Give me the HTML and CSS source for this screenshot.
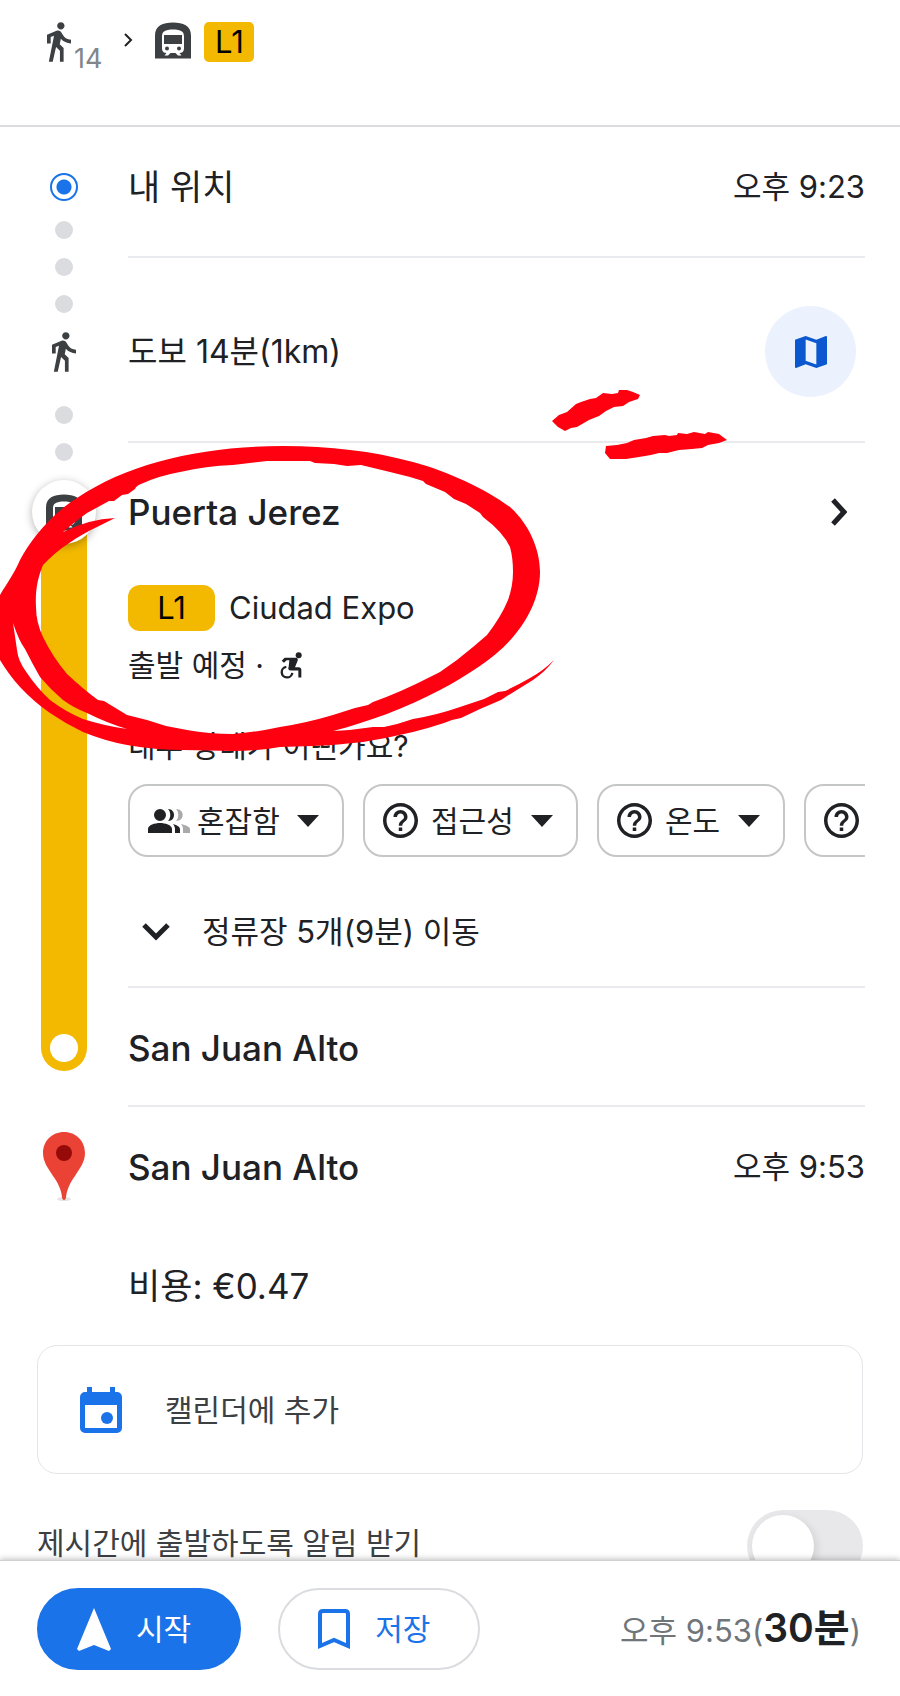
FILE: index.html
```html
<!DOCTYPE html>
<html lang="ko">
<head>
    <meta charset="UTF-8">
    <meta name="viewport" content="width=device-width, initial-scale=1.0">
    <title>San Juan Alto</title>
    <link rel="stylesheet" href="styles.css">
</head>
<body>
    <!-- shared icons -->
    <svg class="sprite" aria-hidden="true">
        <symbol id="walk" viewBox="6 1.5 13 21.5">
            <path d="M13.5 5.5c1.1 0 2-.9 2-2s-.9-2-2-2-2 .9-2 2 .9 2 2 2zM9.8 8.9L7 23h2.1l1.8-8 2.1 2v6h2v-7.500l-2.1-2 .6-3C14.8 12 16.8 13 19 13v-2c-1.900 0-3.500-1-4.300-2.400l-1-1.600c-.4-.6-1-1-1.700-1-.3 0-.5.1-.8.1L6 8.300V13h2V9.600l1.800-.7z"/>
        </symbol>
        <symbol id="subway" viewBox="0 0 36 36">
            <path fill-rule="evenodd" d="M0 36V13C0 3 8 0 18 0s18 3 18 13v23zM7 14v12c0 3 2 4.500 4.500 4.500L9.500 33h3.500l2.500-2.500h5L23 33h3.500l-2-2.500C27 30.500 29 29 29 26V14c0-5-3-7-11-7S7 9 7 14zm2-1.500h18v9H9zM12 24a2 2 0 1 1 0 4 2 2 0 0 1 0-4zm12 0a2 2 0 1 1 0 4 2 2 0 0 1 0-4z"/>
        </symbol>
        <symbol id="help" viewBox="2 2 20 20">
            <path d="M11 18h2v-2h-2v2zm1-16C6.480 2 2 6.480 2 12s4.480 10 10 10 10-4.480 10-10S17.520 2 12 2zm0 18c-4.410 0-8-3.590-8-8s3.590-8 8-8 8 3.590 8 8-3.590 8-8 8zm0-14c-2.210 0-4 1.790-4 4h2c0-1.100.9-2 2-2s2 .9 2 2c0 2-3 1.750-3 5h2c0-2.250 3-2.500 3-5 0-2.210-1.790-4-4-4z"/>
        </symbol>
        <symbol id="caret" viewBox="0 0 22 12">
            <path d="M0 0h22L11 12z"/>
        </symbol>
    </svg>

    <header class="summary">
        <svg class="icon-walk"><use href="#walk"/></svg>
        <span class="minutes">14</span>
        <svg class="sep" viewBox="0 0 9 14"><path d="M1 1l6 6-6 6"/></svg>
        <svg class="icon-subway"><use href="#subway"/></svg>
        <span class="line-badge">L1</span>
    </header>

    <main>
        <div class="route">
            <div class="rail">
                <span class="origin"></span>
                <span class="dot"></span>
                <span class="dot"></span>
                <span class="dot"></span>
                <svg class="icon-walk"><use href="#walk"/></svg>
                <span class="dot after-walk"></span>
                <span class="dot"></span>
                <span class="station"><svg class="icon-subway"><use href="#subway"/></svg></span>
                <span class="track"><span class="stop"></span></span>
                <svg class="pin" viewBox="0 0 42 70">
                    <ellipse cx="21" cy="67" rx="7" ry="2" fill="#e4e4e4"/>
                    <path d="M21 0C9 0 0 9 0 21c0 9 5 15 10 23 5 7 8 13 9 21 0 4 4 4 4 0 1-8 4-14 9-21 5-8 10-14 10-23C42 9 33 0 21 0z" fill="#ea4335"/>
                    <circle cx="21" cy="21" r="8" fill="#960a0a"/>
                </svg>
            </div>

            <div class="steps">
                <section class="step">
                    <h2 class="here">내 위치</h2>
                    <time>오후 9:23</time>
                </section>

                <section class="step step-walk">
                    <p>도보 14분(1km)</p>
                    <button class="map-button" aria-label="지도">
                        <svg viewBox="3 3 18 18"><path d="M20.500 3l-.16.03L15 5.100 9 3 3.360 4.900c-.21.07-.36.25-.36.48V20.500c0 .28.22.5.5.5l.16-.03L9 18.900l6 2.100 5.640-1.900c.21-.07.36-.25.36-.48V3.500c0-.28-.22-.5-.5-.5zM15 19l-6-2.110V5l6 2.110V19z"/></svg>
                    </button>
                </section>

                <section class="step-transit">
                    <div class="station-row">
                        <h2>Puerta Jerez</h2>
                        <button aria-label="Puerta Jerez">
                            <svg class="arrow-right" viewBox="0 0 16 28"><path d="M2 2l11 12L2 26"/></svg>
                        </button>
                    </div>
                    <div class="line-row">
                        <span class="line-badge wide">L1</span>
                        <span>Ciudad Expo</span>
                    </div>
                    <p class="departure">출발 예정 ·
                        <svg class="wheelchair" viewBox="0 0 66 80">
                            <circle cx="56" cy="9" r="9"/>
                            <path d="M14 17h32c8 0 9 5 6 11l-7 17h11c5 0 8 3 8 8v23h-9V55H33c-8 0-10-5-7-11l2-20h-8l-8 8-7-6z"/>
                            <path class="wheel" d="M19 44a16 16 0 1 0 18 18"/>
                        </svg>
                    </p>
                    <p class="question">내부 상태가 어떤가요?</p>
                    <div class="chips">
                        <label class="chip">
                            <svg class="people" viewBox="0 0 42 24">
                                <path d="M12 0a6 6 0 1 1 0 12 6 6 0 0 1 0-12zM0 24v-4c0-4 7-6 12-6s12 2 12 6v4zM20 0c8 0 8 12 0 12 3-3 3-9 0-12zM25 15c4 1 7 3 7 5v4h-5v-4c0-2-1-4-2-5z"/>
                                <path class="pale" d="M28 0c9 0 9 12 0 12 3-3 3-9 0-12zM33 15c5 1 9 3 9 5v4h-7v-4c0-2-1-4-2-5z"/>
                            </svg>
                            <select aria-label="혼잡도"><option>혼잡함</option></select>
                            <svg class="caret"><use href="#caret"/></svg>
                        </label>
                        <label class="chip">
                            <svg class="help"><use href="#help"/></svg>
                            <select aria-label="접근성"><option>접근성</option></select>
                            <svg class="caret"><use href="#caret"/></svg>
                        </label>
                        <label class="chip">
                            <svg class="help"><use href="#help"/></svg>
                            <select aria-label="온도"><option>온도</option></select>
                            <svg class="caret"><use href="#caret"/></svg>
                        </label>
                        <label class="chip">
                            <svg class="help"><use href="#help"/></svg>
                            <select aria-label="안전"><option>안전</option></select>
                            <svg class="caret"><use href="#caret"/></svg>
                        </label>
                    </div>
                    <button class="stops">
                        <svg class="arrow-down" viewBox="0 0 28 18"><path d="M2 2l12 12L26 2"/></svg>
                        <span>정류장 5개(9분) 이동</span>
                    </button>
                </section>

                <section class="step">
                    <h2>San Juan Alto</h2>
                </section>

                <section class="step last">
                    <h2>San Juan Alto</h2>
                    <time>오후 9:53</time>
                </section>

                <p class="fare">비용: €0.47</p>
            </div>

            <!-- hand-drawn marks over the route -->
            <svg class="marks" viewBox="0 127 740 633" aria-hidden="true">
                <path fill-rule="evenodd" d="M-6 606L0 595C6 585 15 572 20 560C30 541 50 515 77 498C130 462 205 446 283 446C330 446 372 451 413 462C450 472 485 489 510 507C528 523 540 548 540 572C540 596 528 620 513 637C496 657 468 675 440 690C406 708 368 722 333 731Q354 730 373 727L384 727Q399 724 413 719Q437 715 460 707L484 699L498 692L505 691Q518 685 530 678Q543 671 554 660Q546 671 533 680L507 696L501 700L480 709L461 718L452 720L444 723Q429 728 413 732Q388 738 363 742Q338 745 313 746L280 747Q257 751 233 751L183 750Q155 750 127 745Q105 741 83 732Q66 724 50 713Q34 702 20 687Q9 675 0 660L-6 650zM115 518Q89 519 63 532Q72 524 87 513L109 501L114 501L122 495L128 494L135 489Q136 486 141 484Q158 476 180 472Q206 466 233 465L267 461L283 461L310 461L315 463L334 464L347 466L361 465L390 472L410 477L423 481L426 484L445 492L454 499L466 504L480 513L483 517Q503 532 510 547Q513 558 513 572Q513 586 508 600Q501 617 487 635L473 647Q458 660 440 672L430 677Q401 692 373 702L368 705L355 708L333 715Q306 723 280 727Q257 732 233 734Q209 734 187 730L166 726L147 720L127 715L104 701L98 700Q83 689 67 674Q52 656 43 637Q36 622 36 607C35 590 38 577 43 565C58 549 78 536 97 527zM13 623Q19 641 25 649Q32 663 40 677Q50 689 63 700Q74 708 87 713Q107 723 127 729Q105 726 83 719Q66 712 50 700Q37 688 27 673Q18 661 17 650Q15 636 13 623z"/>
                <path d="M552 421L559 415L567 412L576 404L581 402L590 399L596 398L603 393L612 394L618 393L619 390L627 390L633 392L640 395L638 399L629 402L623 406L614 407L606 411L599 416L589 420L577 427L571 428L565 431L558 427z"/>
                <path d="M606 446L617 445L627 443L634 440L646 438L653 436L665 435L669 436L677 435L678 433L687 434L694 432L705 434L708 432L719 434L727 440L719 443L708 445L702 448L692 449L679 450L667 453L659 453L651 455L639 457L626 459L616 459L610 459L605 453z"/>
            </svg>
        </div>

        <button class="calendar-card">
            <svg viewBox="0 0 42 46"><path fill-rule="evenodd" d="M7 0h5v5h18V0h5v5h2a5 5 0 0 1 5 5v31a5 5 0 0 1-5 5H5a5 5 0 0 1-5-5V10a5 5 0 0 1 5-5h2zM5 18v23h32V18z"/><circle cx="27" cy="31" r="6"/></svg>
            <span>캘린더에 추가</span>
        </button>

        <div class="reminder">
            <label for="reminder">제시간에 출발하도록 알림 받기</label>
            <input type="checkbox" id="reminder" role="switch">
        </div>
    </main>

    <footer class="actions">
        <button class="pill primary">
            <svg class="nav" viewBox="0 0 34 43"><path d="M17 0l17 41-2 2-15-6-15 6-2-2z"/></svg>
            <span>시작</span>
        </button>
        <button class="pill">
            <svg class="bookmark" viewBox="0 0 32 41"><path d="M2 37V5q0-3 3-3h22q3 0 3 3v32l-14-6z"/></svg>
            <span>저장</span>
        </button>
        <p class="arrival">오후 9:53(<strong>30분</strong>)</p>
    </footer>
</body>
</html>
```

FILE: styles.css
```css
* {
    box-sizing: border-box;
}
body {
    margin: 0;
    height: 100vh;
    display: flex;
    flex-direction: column;
    background: #fff;
    color: #202124;
    font-family: Inter, "Noto Sans CJK KR", sans-serif;
    font-size: 30px;
    line-height: 40px;
}
h2, p {
    margin: 0;
}
h2 {
    font-size: 35px;
    font-weight: 500;
}
.here {
    font-weight: 400;
}
svg {
    display: block;
    flex: none;
    fill: currentColor;
}
button, select {
    font: inherit;
    color: inherit;
    background: none;
    border: none;
    padding: 0;
    cursor: pointer;
}
.sprite {
    position: absolute;
    width: 0;
    height: 0;
}

/* summary */
.summary {
    display: flex;
    align-items: flex-start;
    flex: none;
    height: 127px;
    padding: 22px 47px;
    border-bottom: 2px solid #dadce0;
}
.icon-walk {
    width: 24px;
    height: 40px;
    color: #3c4043;
}
.icon-subway {
    width: 36px;
    height: 37px;
    color: #3c4043;
}
.minutes {
    margin: 17px 22px 0 3px;
    font-size: 27px;
    color: #80868b;
}
.sep {
    width: 9px;
    height: 14px;
    margin: 11px 22px 0 0;
}
.sep path, .arrow-right path, .arrow-down path {
    fill: none;
    stroke: currentColor;
    stroke-width: 2;
}
.line-badge {
    width: 50px;
    margin-left: 13px;
    border-radius: 5px;
    background: #f2b900;
    color: #000;
    font-size: 31px;
    text-align: center;
}

/* route */
main {
    flex: 1;
    min-height: 0;
    overflow: hidden auto;
    scrollbar-width: none;
}
.route {
    position: relative;
    display: flex;
}
.rail {
    flex: none;
    width: 128px;
    padding-top: 46px;
    display: flex;
    flex-direction: column;
    align-items: center;
}
.origin {
    width: 28px;
    height: 28px;
    margin-bottom: 1px;
    border: 2px solid #1a73e8;
    border-radius: 50%;
    background: radial-gradient(circle, #1a73e8 7px, #fff 8px);
}
.dot {
    width: 18px;
    height: 18px;
    margin-top: 19px;
    border-radius: 50%;
    background: #dadce0;
}
.rail .icon-walk {
    margin-top: 19px;
}
.dot.after-walk {
    margin-top: 34px;
}
.station {
    z-index: 1;
    display: flex;
    align-items: center;
    justify-content: center;
    width: 64px;
    height: 64px;
    margin-top: 19px;
    border-radius: 50%;
    background: #fff;
    box-shadow: 0 2px 8px rgba(0, 0, 0, 0.3);
}
.track {
    display: flex;
    flex: 1;
    align-items: flex-end;
    width: 46px;
    margin-top: -32px;
    padding: 9px;
    border-radius: 0 0 23px 23px;
    background: #f2b900;
}
.stop {
    width: 28px;
    height: 28px;
    border-radius: 50%;
    background: #fff;
}
.pin {
    width: 42px;
    height: 70px;
    margin: 61px 0 143px;
}
.steps {
    flex: 1;
    min-width: 0;
    padding-right: 35px;
}
.step, .step-transit {
    border-bottom: 2px solid #e8eaed;
}
.step {
    display: flex;
    justify-content: space-between;
    padding: 40px 0 37px;
}
.step:first-child {
    padding-bottom: 49px;
}
.step.last {
    border: none;
}
time {
    font-size: 31px;
}
.step-walk {
    align-items: center;
    padding: 48px 9px 44px 0;
    font-size: 32px;
}
.map-button {
    display: flex;
    align-items: center;
    justify-content: center;
    width: 91px;
    height: 91px;
    border-radius: 50%;
    background: #ecf2fd;
    color: #0b57d0;
}
.map-button svg {
    width: 32px;
    height: 32px;
}
.step-transit {
    padding: 49px 0 34px;
}
.station-row {
    display: flex;
    justify-content: space-between;
    padding-right: 18px;
}
.arrow-right {
    width: 16px;
    height: 28px;
}
.arrow-right path, .arrow-down path {
    stroke-width: 5;
}
.line-row {
    display: flex;
    gap: 14px;
    margin-top: 53px;
    font-size: 31px;
    line-height: 46px;
}
.line-badge.wide {
    width: 87px;
    margin: 0;
    border-radius: 12px;
}
.departure {
    display: flex;
    align-items: center;
    gap: 16px;
    margin-top: 14px;
}
.wheelchair {
    width: 22px;
    height: 27px;
}
.wheelchair .wheel {
    fill: none;
    stroke: currentColor;
    stroke-width: 7;
}
.question {
    margin-top: 41px;
}
.chips {
    display: flex;
    gap: 19px;
    margin-top: 18px;
    overflow: hidden;
}
.chip {
    display: flex;
    align-items: center;
    flex: none;
    height: 73px;
    padding: 0 23px 0 18px;
    border: 2px solid #c4c7c5;
    border-radius: 20px;
}
.chip select {
    margin: 0 17px 0 10px;
    appearance: none;
}
.people {
    width: 42px;
    height: 24px;
    margin-right: -3px;
}
.people .pale {
    fill: #aaa;
}
.help {
    width: 35px;
    height: 35px;
    margin-right: 3px;
}
.caret {
    width: 22px;
    height: 12px;
}
.stops {
    display: flex;
    align-items: center;
    gap: 32px;
    margin-top: 55px;
    padding-left: 14px;
    font-size: 31px;
}
.arrow-down {
    width: 28px;
    height: 18px;
}
.fare {
    margin: 42px 0 39px;
    font-size: 35px;
}
.marks {
    position: absolute;
    z-index: 2;
    top: 0;
    left: 0;
    width: 740px;
    height: 633px;
    color: #ff0010;
    pointer-events: none;
}

/* cards under the route */
.calendar-card {
    display: flex;
    align-items: center;
    gap: 43px;
    width: calc(100% - 74px);
    height: 129px;
    margin: 0 37px;
    padding: 0 42px;
    border: 1px solid #e3e5e9;
    border-radius: 20px;
    color: #3c4043;
}
.calendar-card svg {
    width: 42px;
    height: 46px;
    color: #1a73e8;
}
.reminder {
    display: flex;
    align-items: flex-start;
    justify-content: space-between;
    margin: 36px 37px 24px;
    color: #3c4043;
}
.reminder label {
    padding-top: 13px;
}
.reminder input {
    appearance: none;
    width: 116px;
    height: 72px;
    margin: 0;
    padding: 5px;
    border-radius: 36px;
    background: #e8e8ea;
}
.reminder input::before {
    content: "";
    display: block;
    width: 62px;
    height: 62px;
    border-radius: 50%;
    background: #fff;
    box-shadow: 3px 3px 8px rgba(0, 0, 0, 0.1);
}
.reminder input:checked {
    background: #1a73e8;
}
.reminder input:checked::before {
    margin-left: auto;
}

/* bottom bar */
.actions {
    z-index: 3;
    display: flex;
    align-items: center;
    flex: none;
    gap: 37px;
    padding: 27px 39px 26px 37px;
    border-top: 1px solid #d0d0d0;
    box-shadow: 0 -1px 6px rgba(0, 0, 0, 0.25);
    background: #fff;
}
.pill {
    display: flex;
    align-items: center;
    gap: 25px;
    height: 82px;
    padding: 0 48px 0 38px;
    border: 2px solid #dadce0;
    border-radius: 41px;
    color: #1a73e8;
}
.pill.primary {
    border-color: #1a73e8;
    background: #1a73e8;
    color: #fff;
}
.nav {
    width: 34px;
    height: 43px;
}
.bookmark {
    width: 32px;
    height: 41px;
}
.bookmark path {
    fill: none;
    stroke: currentColor;
    stroke-width: 4;
}
.arrival {
    margin-left: auto;
    font-size: 31px;
    color: #70757a;
}
.arrival strong {
    font-size: 39px;
    font-weight: 600;
    color: #202124;
}
```
